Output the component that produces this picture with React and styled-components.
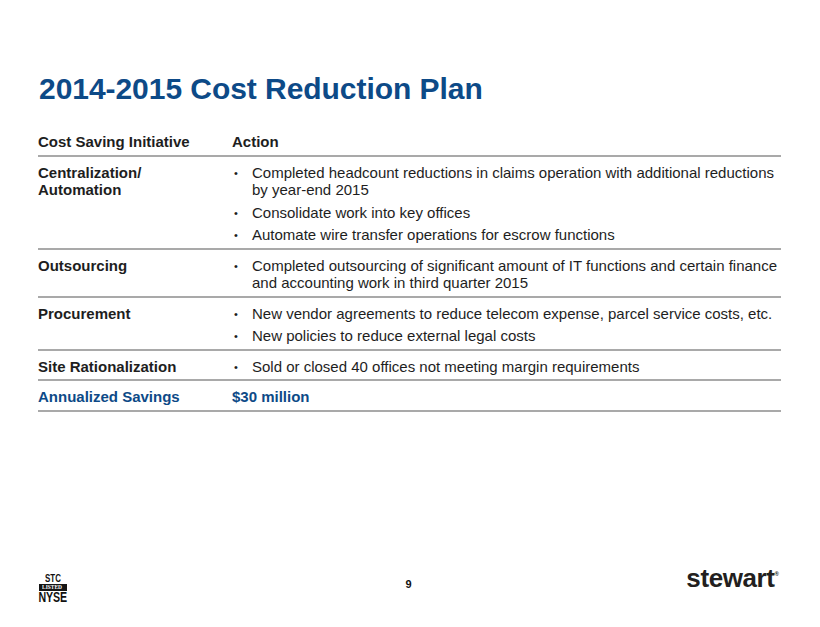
import React from "react";
import styled, { createGlobalStyle } from "styled-components";

const Global = createGlobalStyle`
  html, body { margin: 0; padding: 0; background: #ffffff; }
  body { font-family: "Liberation Sans", Arial, sans-serif; }
  * { box-sizing: border-box; }
`;

const BLUE = "#0d4a87";
const TEXT = "#1e1e1e";
const RULE = "#a9a9a9";

const Page = styled.div`
  width: 820px;
  height: 627px;
  display: flex;
  flex-direction: column;
  padding: 71px 39px 24px 38px;
  background: #fff;
  overflow: hidden;
`;

const Title = styled.h1`
  margin: 0 0 0 1px;
  font-family: "Liberation Sans", Arial, sans-serif;
  font-weight: bold;
  font-size: 30px;
  line-height: 36px;
  color: ${BLUE};
  letter-spacing: -0.05px;
`;

const Table = styled.div`
  margin-top: 26px;
  width: 743px;
  display: flex;
  flex-direction: column;
`;

const Row = styled.div`
  display: grid;
  grid-template-columns: 194px 1fr;
  border-bottom: 2px solid ${RULE};
  padding: ${(p) => (p.$header ? "0 0 4.6px" : "7px 0 4.3px")};
  font-size: 15px;
  line-height: 17.2px;
  color: ${TEXT};
`;

const Label = styled.div`
  font-weight: bold;
  color: ${(p) => (p.$accent ? BLUE : TEXT)};
`;

const ActionHead = styled.div`
  font-weight: bold;
  color: ${(p) => (p.$accent ? BLUE : TEXT)};
`;

const Bullets = styled.ul`
  margin: 0;
  padding: 0;
  list-style: none;
  display: flex;
  flex-direction: column;
  gap: 5.5px;
`;

const Item = styled.li`
  display: grid;
  grid-template-columns: 20px 1fr;
`;

const Dot = styled.span`
  display: block;
  font-size: 11px;
  line-height: 17.2px;
  padding-left: 2px;
  transform: translateY(1.4px);
  color: ${TEXT};
`;

const Footer = styled.div`
  margin-top: auto;
  display: grid;
  grid-template-columns: 1fr auto 1fr;
  align-items: start;
  height: 37px;
  padding-right: 2px;
`;

const Nyse = styled.div`
  margin-top: 8px;
  width: 29px;
  display: flex;
  flex-direction: column;
  align-items: center;
  color: #111;
  font-family: "Liberation Sans", Arial, sans-serif;
  font-weight: bold;
`;

const Stc = styled.div`
  font-size: 11px;
  line-height: 9px;
  height: 9px;
  transform: scaleX(0.72);
`;

const Listed = styled.div`
  margin-top: 1px;
  width: 28px;
  height: 7px;
  background: #151515;
  color: #fff;
  display: flex;
  align-items: center;
  justify-content: center;
  overflow: hidden;
`;

const ListedText = styled.span`
  font-family: "Liberation Serif", "Times New Roman", serif;
  font-weight: bold;
  font-size: 6px;
  line-height: 7px;
  display: inline-block;
  transform: scaleX(0.9);
`;

const NyseText = styled.div`
  margin-top: 1px;
  font-size: 14px;
  line-height: 11px;
  height: 11px;
  transform: scaleX(0.76);
  letter-spacing: -0.2px;
`;

const PageNum = styled.div`
  margin-top: 13px;
  font-size: 11px;
  line-height: 11px;
  font-weight: bold;
  color: #111;
`;

const Stewart = styled.div`
  justify-self: end;
  margin-top: -1px;
  font-family: "Liberation Sans", Arial, sans-serif;
  font-weight: bold;
  font-size: 26px;
  line-height: 26px;
  letter-spacing: -0.4px;
  color: #231f20;
  display: flex;
  align-items: flex-start;
`;

const Reg = styled.span`
  font-size: 6px;
  line-height: 6px;
  margin-top: 6px;
  letter-spacing: 0;
`;

const rows = [
  {
    label: ["Centralization/", "Automation"],
    items: [
      "Completed headcount reductions in claims operation with additional reductions by year-end 2015",
      "Consolidate work into key offices",
      "Automate wire transfer operations for escrow functions",
    ],
  },
  {
    label: ["Outsourcing"],
    items: [
      "Completed outsourcing of significant amount of IT functions and certain finance and accounting work in third quarter 2015",
    ],
  },
  {
    label: ["Procurement"],
    items: [
      "New vendor agreements to reduce telecom expense, parcel service costs, etc.",
      "New policies to reduce external legal costs",
    ],
  },
  {
    label: ["Site Rationalization"],
    items: ["Sold or closed 40 offices not meeting margin requirements"],
  },
];

export default function App() {
  return (
    <>
      <Global />
      <Page>
        <Title>2014-2015 Cost Reduction Plan</Title>
        <Table>
          <Row $header>
            <Label>Cost Saving Initiative</Label>
            <ActionHead>Action</ActionHead>
          </Row>
          {rows.map((r) => (
            <Row key={r.label.join("")}>
              <Label>
                {r.label.map((l, i) => (
                  <div key={i}>{l}</div>
                ))}
              </Label>
              <Bullets>
                {r.items.map((t) => (
                  <Item key={t}>
                    <Dot>•</Dot>
                    <span>{t}</span>
                  </Item>
                ))}
              </Bullets>
            </Row>
          ))}
          <Row>
            <Label $accent>Annualized Savings</Label>
            <ActionHead $accent>$30 million</ActionHead>
          </Row>
        </Table>
        <Footer>
          <Nyse>
            <Stc>STC</Stc>
            <Listed>
              <ListedText>LISTED</ListedText>
            </Listed>
            <NyseText>NYSE</NyseText>
          </Nyse>
          <PageNum>9</PageNum>
          <Stewart>
            stewart<Reg>®</Reg>
          </Stewart>
        </Footer>
      </Page>
    </>
  );
}
